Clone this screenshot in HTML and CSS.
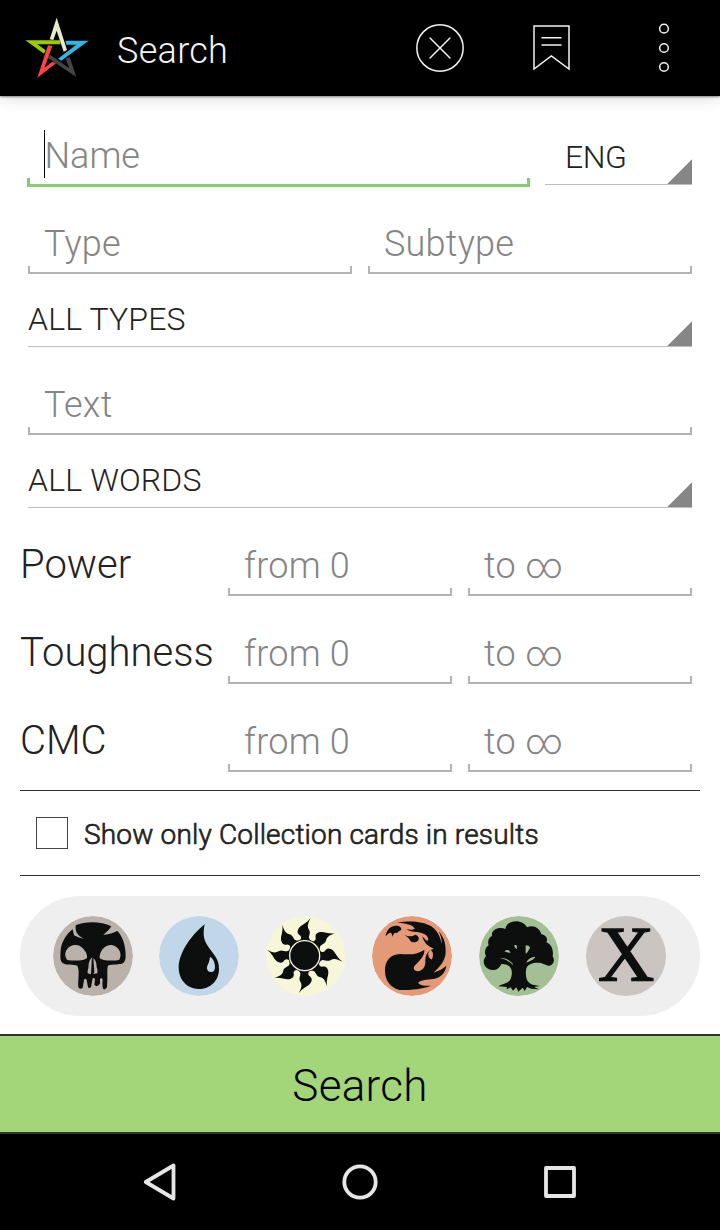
FILE: index.html
```html
<!DOCTYPE html>
<html lang="en">
<head>
<meta charset="utf-8">
<title>Search</title>
<link rel="stylesheet" href="styles.css">
</head>
<body>
<div class="screen">
  <header class="bar">
    <svg class="logo" viewBox="72 48 198 192">
      <path fill="#33b5e5" d="M266 122L184 182L174 176L229 134L199 134L196 122Z"/>
      <path fill="#e6ebc8" d="M170 53L201 150L191 155L170 92L160 120L149 118Z"/>
      <path fill="#99cc00" d="M76 121H181V133H112L137 151L132 161Z"/>
      <path fill="#464446" d="M229 231L143 173L150 164L208 205L197 176L209 171Z"/>
      <path fill="#ff4444" d="M112 233L144 136L157 138L133 204L157 185L168 190Z"/>
    </svg>
    <h1 class="title">Search</h1>
    <svg class="action clear" viewBox="48 72 144 144"><circle cx="120" cy="144" r="69.5"/><path d="M90 114L150 174M150 114L90 174"/></svg>
    <svg class="action bookmark" viewBox="396 72 117 144"><path d="M402 78H507V207L454 168L402 207ZM426 113H483M426 135H483"/></svg>
    <svg class="action more" viewBox="774 69 36 150"><circle cx="792" cy="86" r="13"/><circle cx="792" cy="144" r="13"/><circle cx="792" cy="201" r="13"/></svg>
  </header>

  <main class="form">
    <div class="row name-row">
      <div class="field focused"><span class="hint">Name</span><i class="bracket"></i></div>
      <div class="spinner lang"><span class="value">ENG</span></div>
    </div>
    <div class="row"><div class="field"><span class="hint">Type</span><i class="bracket"></i></div><div class="field"><span class="hint">Subtype</span><i class="bracket"></i></div></div>
    <div class="row short"><div class="spinner"><span class="value">ALL TYPES</span></div></div>
    <div class="row"><div class="field"><span class="hint">Text</span><i class="bracket"></i></div></div>
    <div class="row short"><div class="spinner"><span class="value">ALL WORDS</span></div></div>
    <div class="row range"><span class="label">Power</span><div class="field"><span class="hint">from 0</span><i class="bracket"></i></div><div class="field"><span class="hint">to ∞</span><i class="bracket"></i></div></div>
    <div class="row range"><span class="label">Toughness</span><div class="field"><span class="hint">from 0</span><i class="bracket"></i></div><div class="field"><span class="hint">to ∞</span><i class="bracket"></i></div></div>
    <div class="row range"><span class="label">CMC</span><div class="field"><span class="hint">from 0</span><i class="bracket"></i></div><div class="field"><span class="hint">to ∞</span><i class="bracket"></i></div></div>
  </main>

  <div class="option"><span class="box"></span><span class="option-text">Show only Collection cards in results</span></div>

  <div class="colors">
    <svg class="mana" viewBox="39 48 240 240">
      <circle cx="159" cy="168" r="120" fill="#bab1ab"/>
      <path fill="#0d0f0f" d="M107 76C135 63 184 63 214 79C209 88 199 97 190 104C204 105 220 98 232 93C249 109 258 142 257 170C256 186 249 192 238 192C229 195 218 192 205 196C200 205 203 220 202 238L201 262Q195 271 190 267Q186 262 188 238Q185 232 180 236V251Q174 257 170 259L163 255L165 238Q162 232 158 235L153 262Q147 266 144 262L140 240Q136 232 132 240L128 264Q119 269 115 262C113 240 120 213 112 197C99 193 82 197 69 190C59 184 61 168 62 151C64 127 78 103 98 88L102 106C110 110 120 114 131 116C114 107 105 98 107 76Z"/>
      <path fill="#bab1ab" d="M81 179C67 158 84 135 107 135C126 135 144 159 141 174C136 182 99 184 81 179ZM238 179C250 158 232 135 211 135C190 135 177 161 179 174C184 182 219 184 238 179ZM157 172Q145 180 145 205Q142 213 143 220L153 223L155 183ZM160 175L163 216L160 222L172 220Q174 210 170 202Q170 183 160 175Z"/>
    </svg>
    <svg class="mana" viewBox="27 48 240 240">
      <circle cx="147" cy="168" r="120" fill="#c1d7e9"/>
      <path fill="#0d0f0f" d="M164 73C158 103 160 121 178 145C195 168 207 180 207 206C207 243 180 267 146 267C112 267 86 240 86 202C87 154 128 102 164 73Z"/>
      <path fill="#c1d7e9" d="M180 170C189 175 195 187 195 201C195 212 190 217 182 216C173 215 169 207 172 197C177 187 179 180 180 170Z"/>
    </svg>
    <svg class="mana" viewBox="33 48 240 240">
      <circle cx="151" cy="168" r="120" fill="#f8f6d8"/>
      <g transform="translate(149 167)" fill="#0d0f0f">
        <circle r="49"/>
        <path id="ray" d="M-18 -44C-10 -48 -9 -55 -13 -60C-20 -65 -24 -69 -19 -80C-12 -93 4 -94 18 -113C11 -99 6 -89 13 -78C19 -70 12 -60 13 -53Q15 -47 20 -44Z"/>
        <use href="#ray" transform="rotate(45)"/><use href="#ray" transform="rotate(90)"/><use href="#ray" transform="rotate(135)"/><use href="#ray" transform="rotate(180)"/><use href="#ray" transform="rotate(225)"/><use href="#ray" transform="rotate(270)"/><use href="#ray" transform="rotate(315)"/>
        <circle r="45" stroke="#f8f6d8" stroke-width="4"/>
      </g>
    </svg>
    <svg class="mana red" viewBox="36 48 240 240">
      <circle cx="156" cy="168" r="120" fill="#e49977"/>
      <path fill="#0d0f0f" d="M112 68C145 61 188 63 214 79C232 93 240 107 245 132C246 119 242 105 236 94C252 112 258 132 257 159C255 184 238 202 220 218C237 213 250 205 259 197C256 221 239 234 219 237C201 240 184 239 174 248C180 257 195 258 212 257C188 267 158 270 119 270C91 263 75 241 75 213C74 182 92 163 120 162C148 164 172 164 193 149C195 165 180 181 166 195C157 204 162 213 173 214C188 213 197 200 196 184C196 166 202 151 222 146C205 141 191 128 187 109C197 120 200 125 205 120C205 105 190 99 172 96C156 96 146 93 139 88C151 89 160 90 164 86C159 73 135 70 112 68Z"/>
      <path fill="#0d0f0f" d="M77 109C78 91 91 77 109 77C121 77 126 85 123 91C117 93 114 96 111 100C104 96 101 101 98 110C97 105 95 101 93 98C87 98 82 103 77 109ZM133 105C148 111 157 109 165 104C176 106 180 116 173 123C165 130 151 128 148 117C144 112 139 108 133 105Z"/>
      <path fill="#e49977" d="M211 149C220 155 221 165 216 178C208 178 203 167 205 159Z"/>
    </svg>
    <svg class="mana" viewBox="42 48 240 240">
      <circle cx="162" cy="168" r="120" fill="#a3c095"/>
      <path fill="#0d0f0f" d="M121 87C126 57 174 56 186 82C204 73 224 83 229 103C243 105 250 117 244 127C260 133 266 151 263 169C272 182 264 198 249 197C240 194 231 188 220 188C201 188 183 193 183 213C181 235 187 249 203 254L224 258L207 261L222 268L199 266L186 261L179 273L173 263L160 275L154 262L144 272L137 262L124 268L126 261L100 259C122 248 137 250 140 225C143 205 134 192 109 192C103 210 81 216 66 204C53 195 54 177 63 169C57 157 60 143 71 136C67 124 71 113 81 108C77 87 105 79 121 87Z"/>
      <path fill="#a3c095" d="M105 174Q127 172 143 191Q146 197 141 193Q130 180 105 174ZM118 154Q131 145 137 158Q127 159 118 154ZM147 136Q154 133 156 139L155 148Q150 145 147 136ZM182 136Q193 137 195 143Q189 156 182 162ZM184 188Q189 173 210 170Q213 177 184 188Z"/>
    </svg>
    <span class="mana colorless">X</span>
  </div>

  <button class="submit" type="button">Search</button>

  <nav class="nav">
    <svg class="key" viewBox="0 0 40 40"><path d="M5.8 20L33.5 3.5V36.5Z"/></svg>
    <svg class="key" viewBox="0 0 40 40"><circle cx="20" cy="20" r="15.7"/></svg>
    <svg class="key" viewBox="0 0 40 40"><path d="M6 6H34V34H6Z"/></svg>
  </nav>
</div>
</body>
</html>
```
FILE: styles.css
```css
* { box-sizing: border-box; }
body { margin: 0; font-family: Roboto, sans-serif; font-weight: 300; color: #222; background: #fff; }
.screen { width: 720px; height: 1230px; display: flex; flex-direction: column; overflow: hidden; }

.bar { height: 96px; flex: none; display: flex; align-items: center; background: #000; padding: 0 44px 0 24px; box-shadow: 0 1px 2px rgba(0,0,0,.45), 0 2px 16px rgba(0,0,0,.14); }
.logo { width: 66px; height: 64px; }
.title { margin: 5px auto 0 27px; font-size: 36px; line-height: 48px; font-weight: 300; letter-spacing: .3px; color: #f3f3f3; }
.action { fill: none; stroke: #f3f3f3; stroke-width: 4.5; stroke-linecap: round; }
.clear { width: 48px; height: 48px; margin-right: 68px; }
.bookmark { width: 39px; height: 48px; margin-right: 87px; }
.more { width: 12px; height: 50px; margin-right: 6px; }

.form { flex: none; padding: 2px 28px 18px; }
.row { display: flex; align-items: flex-end; gap: 16px; height: 88px; }
.row.short { height: 73px; }
.field { flex: 1; display: flex; flex-direction: column; }
.hint { padding-left: 16px; margin-bottom: 2px; font-size: 36px; line-height: 40px; letter-spacing: .25px; color: #848484; white-space: nowrap; }
.bracket { height: 8px; border: solid #b3b3b3; border-width: 0 2px 2px; }
.name-row { gap: 15px; }
.focused { margin: 0 0 -1px -1px; }
.focused .hint { margin: 0 0 0 17px; padding: 0 0 2px; height: 48px; line-height: 52px; letter-spacing: 0; text-indent: -.5px; border-left: 1px solid #000; }
.focused .bracket { height: 9px; border-color: #82ce6c; border-width: 0 3px 3px; }
.spinner { flex: 1; display: flex; align-items: flex-end; height: 48px; padding-bottom: 7px; border-bottom: 1px solid #bdbdbd;
  background: linear-gradient(135deg, transparent 49.5%, #868686 51.5%) right bottom / 25px 25px no-repeat; }
.lang { flex: 0 0 147px; padding-left: 20px; margin-bottom: 1px; }
.value { font-size: 32px; line-height: 40px; letter-spacing: .15px; }
.lang .value { letter-spacing: -.5px; }
.range .label { width: 200px; margin: 0 -8px 7px -8px; font-size: 40px; line-height: 48px; white-space: nowrap; }

.option { height: 86px; flex: none; margin: 0 20px; padding-left: 16px; display: flex; align-items: center; gap: 16px; border: solid #333; border-width: 1px 0; }
.box { width: 32px; height: 32px; border: 1px solid #444; }
.option-text { font-size: 28px; letter-spacing: .18px; -webkit-text-stroke: .7px #222; margin-top: 3px; }

.colors { height: 120px; flex: none; margin: 20px 20px 18px; padding: 0 20.6px 0 19.4px; display: grid; grid-template-columns: repeat(6, 1fr); place-items: center; background: #efefef; border-radius: 60px; }
.mana { width: 80px; height: 80px; border-radius: 50%; }
.red { margin-right: 1px; }
.colorless { display: flex; align-items: center; justify-content: center; padding-bottom: 4px; background: #cbc5c1; color: #0d0f0f; font: 78px/76px "Liberation Serif", serif; -webkit-text-stroke: 1.4px #0d0f0f; }

.submit { height: 100px; flex: none; padding: 4px 0 0; border: solid #333; border-width: 2px 0; background: #a3d678; font: 300 44px/52px Roboto, sans-serif; letter-spacing: .3px; color: #000; }

.nav { height: 96px; flex: none; display: flex; justify-content: center; align-items: center; gap: 160px; background: #000; }
.key { width: 40px; height: 40px; fill: none; stroke: #e6e6e6; stroke-width: 3.8; stroke-linejoin: round; }
```
